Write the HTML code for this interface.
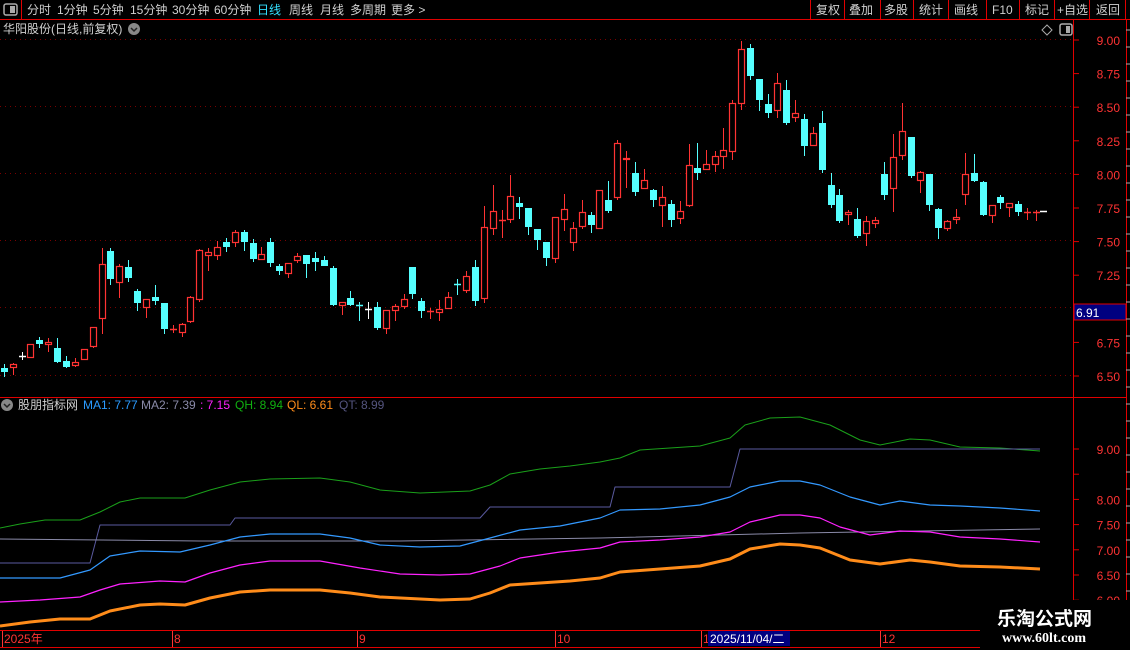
<!DOCTYPE html><html><head><meta charset="utf-8"><style>
body{margin:0;background:#000;width:1130px;height:650px;overflow:hidden;position:relative;font-family:"Liberation Sans","Noto Sans CJK SC",sans-serif;}
.t{position:absolute;font-size:12px;color:#d0d0d0;white-space:nowrap;line-height:14px}
</style></head><body>
<svg id="s" width="1130" height="650" style="position:absolute;left:0;top:0" xmlns="http://www.w3.org/2000/svg"></svg>
<div class="t" style="left:27px;top:3px">分时</div>
<div class="t" style="left:57px;top:3px">1分钟</div>
<div class="t" style="left:93px;top:3px">5分钟</div>
<div class="t" style="left:130px;top:3px">15分钟</div>
<div class="t" style="left:172px;top:3px">30分钟</div>
<div class="t" style="left:214px;top:3px">60分钟</div>
<div class="t" style="left:257px;top:3px;color:#33e0ff">日线</div>
<div class="t" style="left:289px;top:3px">周线</div>
<div class="t" style="left:320px;top:3px">月线</div>
<div class="t" style="left:350px;top:3px">多周期</div>
<div class="t" style="left:391px;top:3px">更多 &gt;</div>
<div class="t" style="left:816px;top:3px">复权</div>
<div class="t" style="left:849px;top:3px">叠加</div>
<div class="t" style="left:884px;top:3px">多股</div>
<div class="t" style="left:919px;top:3px">统计</div>
<div class="t" style="left:954px;top:3px">画线</div>
<div class="t" style="left:992px;top:3px">F10</div>
<div class="t" style="left:1025px;top:3px">标记</div>
<div class="t" style="left:1057px;top:3px">+自选</div>
<div class="t" style="left:1096px;top:3px">返回</div>
<div class="t" style="left:3px;top:22px">华阳股份(日线,前复权)</div>
<div class="t" style="left:18px;top:398px">股朋指标网</div>
<div class="t" style="left:83px;top:398px;color:#2b9bff">MA1: 7.77</div>
<div class="t" style="left:141px;top:398px;color:#8a8aa8">MA2: 7.39</div>
<div class="t" style="left:200px;top:398px;color:#ff22ff">: 7.15</div>
<div class="t" style="left:235px;top:398px;color:#10b010">QH: 8.94</div>
<div class="t" style="left:287px;top:398px;color:#ff8c1a">QL: 6.61</div>
<div class="t" style="left:339px;top:398px;color:#55557f">QT: 8.99</div>
<div style="position:absolute;left:980px;top:600px;width:150px;height:50px;background:#000"></div>
<div class="t" style="left:997px;top:608px;font-size:19px;line-height:24px;color:#fff;font-weight:bold">乐淘公式网</div>
<div class="t" style="left:1002px;top:632px;font-family:'Liberation Serif',serif;font-size:14px;color:#fff;font-weight:bold">www.60lt.com</div>
<script>
const s=document.getElementById('s');let h='';
const R='#e00000',CY='#55ffff',RD='#ff3333';
function L(x1,y1,x2,y2,c,w,d){h+=`<line x1="${x1}" y1="${y1}" x2="${x2}" y2="${y2}" stroke="${c}" stroke-width="${w||1}" ${d?'stroke-dasharray="'+d+'"':''}/>`}
[39,106,173,240,307,375].forEach(y=>L(0,y+.5,1073,y+.5,'#7a0000',1,'1 4'));
L(0,19.5,1130,19.5,R);L(1073.5,20,1073.5,630,R);L(1126.5,20,1126.5,650,R);
L(0,397.5,1073,397.5,R);L(1073,397.5,1126,397.5,R);
L(0,630.5,980,630.5,R);L(0,647.5,980,647.5,R);
L(21.5,0,21.5,19,R);
[810,844,880,913,948,986,1019,1054,1089,1125].forEach(x=>L(x+.5,0,x+.5,19,R));
h+=`<rect x="4" y="4" width="13" height="11" rx="2" fill="none" stroke="#aaa" stroke-width="1.5"/><rect x="10" y="6" width="5" height="7" fill="#aaa"/>`;
h+=`<rect x="1060" y="24" width="12" height="11" rx="2" fill="none" stroke="#aaa" stroke-width="1.5"/><rect x="1066" y="26" width="4" height="7" fill="#aaa"/>`;
h+=`<path d="M1047 25 L1052 30 L1047 35 L1042 30Z" fill="none" stroke="#aaa"/>`;
h+=`<circle cx="134" cy="29" r="6" fill="#888"/><path d="M131 28 L134 31 L137 28" stroke="#222" fill="none" stroke-width="1.5"/>`;
h+=`<circle cx="7" cy="405" r="6" fill="#888"/><path d="M4 404 L7 407 L10 404" stroke="#222" fill="none" stroke-width="1.5"/>`;
const lab=['9.00','8.75','8.50','8.25','8.00','7.75','7.50','7.25','7.00','6.75','6.50'];
lab.forEach((t,i)=>{let y=40+i*33.6;L(1073,y,1079,y,R);h+=`<text x="1120" y="${y+5}" fill="${RD}" font-size="12" text-anchor="end" font-family="Liberation Sans">${t}</text>`});
h+=`<rect x="1074" y="304" width="52" height="16" fill="#000080" stroke="${R}"/><text x="1076" y="317" fill="#fff" font-size="12" font-family="Liberation Sans">6.91</text>`;
['9.00','','8.00','7.50','7.00','6.50','6.00'].forEach((t,i)=>{let y=449+i*25.2;L(1073,y,1079,y,R);h+=`<text x="1120" y="${y+5}" fill="${RD}" font-size="12" text-anchor="end" font-family="Liberation Sans">${t}</text>`});
for(let y=30;y<630;y+=17)L(1126,y,1130,y,'#aaa');
[[4,'2025年'],[174,'8'],[359,'9'],[557,'10'],[703,'1'],[882,'12']].forEach(a=>{L(a[0]-1.5,631,a[0]-1.5,647,RD);h+=`<text x="${a[0]}" y="643" fill="${RD}" font-size="12" font-family="Liberation Sans">${a[1]}</text>`});
h+=`<rect x="708" y="631" width="82" height="15" fill="#000080"/><text x="710" y="643" fill="#fff" font-size="12" font-family="Liberation Sans">2025/11/04/二</text>`;
const C=[[4,368,372,364,377,'c'],[13,364,368,363,375,'r'],[22,356,356,352,360,'w'],[30,344,358,344,358,'r'],[39,340,344,337,348,'c'],[48,342,345,338,352,'r'],[57,348,362,338,363,'c'],[66,361,367,356,368,'c'],[75,362,366,358,367,'r'],[84,349,360,349,360,'r'],[93,327,347,327,348,'r'],[102,264,319,248,334,'r'],[110,251,279,248,285,'c'],[119,266,283,264,298,'r'],[128,267,278,260,282,'c'],[137,291,303,289,311,'c'],[146,299,308,299,318,'r'],[155,297,301,285,305,'c'],[164,303,329,303,334,'c'],[173,329,329,325,333,'r'],[182,324,333,323,337,'r'],[190,297,322,296,323,'r'],[199,250,300,249,302,'r'],[208,252,256,248,271,'r'],[217,247,256,241,260,'r'],[226,242,247,238,252,'c'],[235,232,243,230,247,'r'],[244,232,242,230,251,'c'],[253,243,259,239,262,'c'],[261,254,260,247,260,'r'],[270,242,263,238,267,'c'],[279,266,271,264,275,'c'],[288,263,274,263,278,'r'],[297,256,261,253,263,'r'],[306,255,264,255,278,'c'],[315,258,262,252,271,'c'],[324,260,266,256,266,'c'],[333,268,305,266,306,'c'],[342,302,306,302,315,'r'],[350,298,305,291,306,'c'],[359,305,305,302,321,'c'],[368,309,309,302,319,'w'],[377,307,328,302,330,'c'],[386,310,329,310,334,'r'],[395,306,311,304,321,'r'],[404,299,307,294,309,'r'],[412,267,294,267,299,'c'],[421,301,311,298,318,'c'],[430,311,312,308,319,'r'],[439,309,313,300,321,'r'],[448,297,309,292,309,'r'],[457,284,284,279,295,'c'],[466,276,291,271,293,'r'],[475,267,301,260,306,'c'],[484,227,299,206,303,'r'],[493,211,229,185,235,'r'],[502,220,220,210,238,'r'],[510,196,220,175,223,'r'],[519,203,207,197,219,'c'],[528,208,227,208,235,'c'],[537,229,240,229,250,'c'],[546,242,258,242,266,'c'],[555,217,259,217,263,'r'],[564,209,220,194,231,'r'],[573,228,243,222,251,'r'],[582,212,227,200,229,'r'],[591,215,225,212,233,'c'],[599,190,229,190,229,'r'],[608,200,211,181,213,'c'],[617,143,198,140,200,'r'],[626,158,160,151,188,'r'],[635,173,192,162,196,'c'],[644,180,189,169,189,'r'],[653,190,200,189,207,'c'],[662,197,206,186,227,'r'],[671,204,220,200,227,'c'],[680,211,219,201,224,'r'],[689,165,206,144,207,'r'],[697,168,173,143,180,'c'],[706,164,170,150,170,'r'],[715,156,165,151,172,'r'],[723,150,157,128,169,'r'],[732,103,152,100,160,'r'],[741,49,104,41,110,'r'],[750,48,76,44,80,'c'],[759,79,100,79,111,'c'],[768,104,113,94,118,'c'],[777,83,111,73,118,'r'],[786,90,123,80,125,'c'],[795,113,118,100,122,'r'],[804,119,146,114,156,'c'],[813,133,146,127,146,'r'],[822,123,170,111,173,'c'],[831,185,205,173,208,'c'],[839,195,221,189,223,'c'],[848,212,215,210,225,'r'],[857,219,236,208,238,'c'],[866,221,234,216,246,'r'],[875,220,224,217,228,'r'],[884,174,195,162,200,'c'],[893,157,189,134,212,'r'],[902,131,156,103,160,'r'],[911,137,176,137,178,'c'],[920,172,181,171,193,'r'],[929,174,205,174,211,'c'],[938,209,228,208,239,'c'],[947,221,229,220,231,'r'],[956,217,220,209,224,'r'],[965,174,195,153,205,'r'],[974,173,181,154,182,'c'],[983,182,215,181,216,'c'],[992,205,216,205,223,'r'],[1000,197,203,195,209,'c'],[1009,203,208,203,217,'r'],[1018,204,212,201,216,'c'],[1027,212,212,208,220,'r'],[1036,212,212,210,221,'r']];
C.forEach(([x,t,b,wt,wb,k])=>{
 const c=k=='r'?'#ff3333':k=='c'?CY:'#fff';
 L(x+.5,wt,x+.5,wb,c);
 if(b-t<2){L(x-3,t+.5,x+4,t+.5,c,1.5)}
 else if(k=='r'){L(x+.5,wt,x+.5,t,c);h+=`<rect x="${x-2.5}" y="${t+.5}" width="6" height="${b-t-1}" fill="#000" stroke="${c}" stroke-width="1.2"/>`}
 else h+=`<rect x="${x-3}" y="${t}" width="7" height="${b-t}" fill="${c}"/>`;
});
L(1040,211.5,1047,211.5,'#fff',1.5);
function P(pts,c,w){h+=`<polyline points="${pts}" fill="none" stroke="${c}" stroke-width="${w}" stroke-linejoin="round"/>`}
P("0,528 20,524 45,520 80,520 100,512 120,502 140,498 185,498 210,490 240,482 270,479 320,478 350,482 380,490 420,493 470,491 490,485 510,474 540,469 570,466 600,462 620,458 640,450 700,446 730,438 745,425 770,418 800,417 830,425 860,440 880,445 910,439 930,440 960,447 1000,448 1040,451",'#1aa01a',1);
P("0,563 90,563 100,525 230,525 235,518 480,518 490,507 610,507 615,487 730,487 740,449 1040,449",'#5a5aa0',1);
P("0,539 200,541 400,541 600,538 800,533 1040,529",'#8a8aa8',1);
P("0,578 60,578 90,570 110,556 140,551 180,552 210,545 240,537 270,534 320,534 350,538 380,545 420,547 460,546 490,538 520,530 560,526 600,518 620,510 660,509 700,505 730,497 750,487 780,481 800,481 820,485 850,497 880,505 900,501 930,505 960,506 1000,508 1040,511",'#3399ff',1.2);
P("0,602 40,600 80,597 100,590 120,584 160,581 185,582 210,573 240,565 270,561 320,561 360,568 400,574 440,575 470,574 500,566 520,558 560,552 600,548 620,542 660,540 700,537 730,532 750,522 780,515 800,515 820,518 840,527 870,535 900,531 930,532 960,537 1000,539 1040,542",'#ff22ff',1.2);
P("0,626 30,622 60,619 90,619 110,611 140,605 160,604 185,605 210,598 240,592 270,590 320,590 350,593 380,597 440,600 470,599 490,593 510,585 540,583 570,581 600,578 620,572 660,569 700,566 730,559 750,549 780,544 800,545 820,548 850,560 880,564 910,560 930,562 960,566 1000,567 1040,569",'#ff8c1a',3);
s.innerHTML=h;
</script>
</body></html>
